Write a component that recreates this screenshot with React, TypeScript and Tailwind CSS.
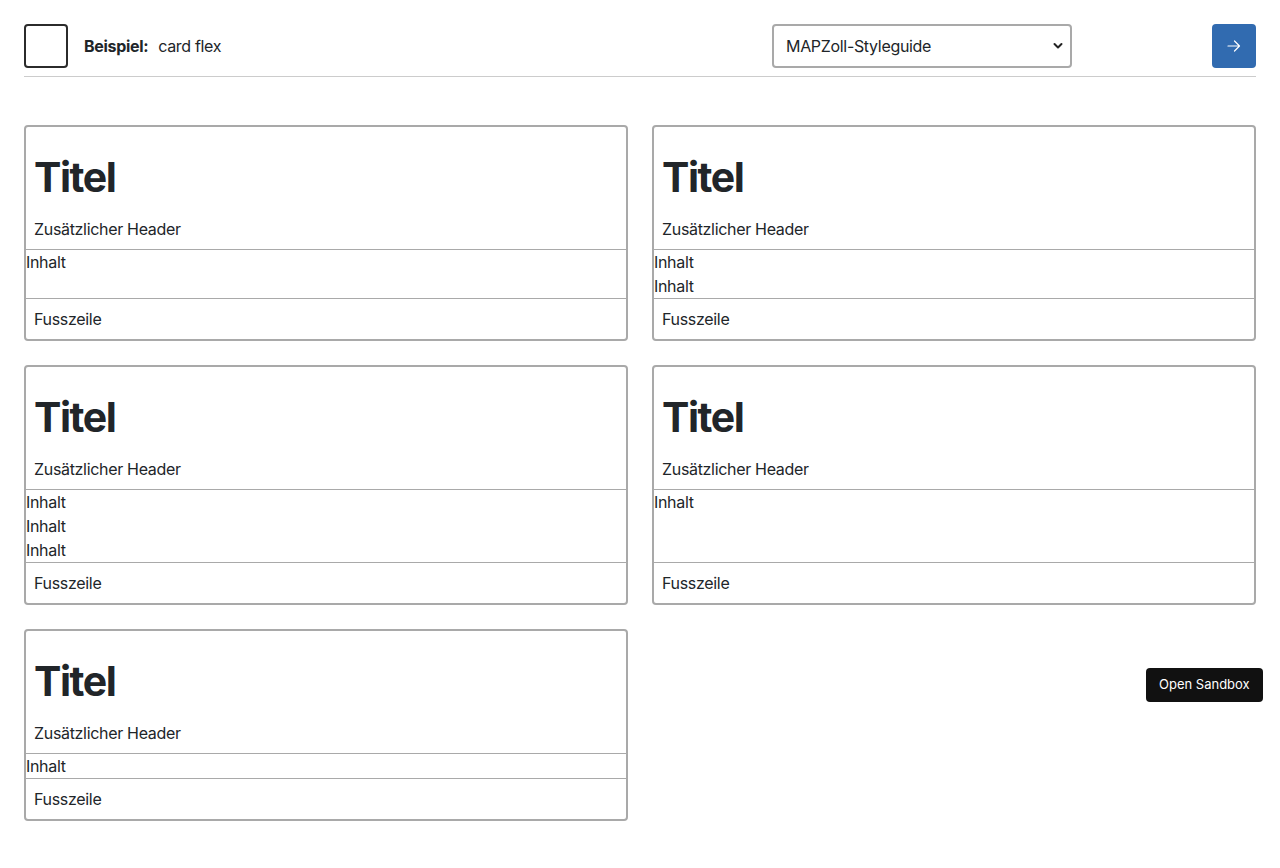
import React from "react";

function Card({ lines }: { lines: number }) {
  return (
    <div className="flex flex-col rounded-[4px] border-2 border-[#a9a9a9] bg-white">
      <div className="px-2 pb-2 pt-[26px]">
        <h1 className="mb-4 text-[41px] font-bold leading-[48px] tracking-[-0.035em] text-[#212529]">Titel</h1>
        <div className="text-base leading-6 tracking-[-0.02em] text-[#212529]">Zusätzlicher Header</div>
      </div>
      <div className="flex-1 border-t border-[#a9a9a9] text-base leading-6 tracking-[-0.02em] text-[#212529]">
        {Array.from({ length: lines }).map((_, i) => (
          <div key={i}>Inhalt</div>
        ))}
      </div>
      <div className="border-t border-[#a9a9a9] px-2 py-2 text-base leading-6 tracking-[-0.02em] text-[#212529]">Fusszeile</div>
    </div>
  );
}

export default function App() {
  return (
    <div className="relative min-h-[868px] bg-white font-['Inter',sans-serif] text-[#212529]">
      <div className="px-6 pt-6">
        <div className="flex items-center pb-2">
          <div className="h-11 w-11 rounded-[4px] border-2 border-[#2b2b2b]" />
          <div className="ml-4 text-base leading-6 tracking-[-0.02em]">
            <span className="font-bold">Beispiel:</span>
            <span className="ml-[10px]">card flex</span>
          </div>
          <div className="relative ml-auto h-11 w-[300px]">
            <select className="h-11 w-full appearance-none rounded-[4px] border-2 border-[#a9a9a9] bg-white pl-3 text-base tracking-[-0.02em] text-[#212529] outline-none">
              <option>MAPZoll-Styleguide</option>
            </select>
            <svg className="pointer-events-none absolute right-[9px] top-[18px]" width="10" height="8" viewBox="0 0 10 8">
              <path d="M1.5 2 L5 5.5 L8.5 2" fill="none" stroke="#222" strokeWidth="2" strokeLinecap="round" strokeLinejoin="round" />
            </svg>
          </div>
          <button className="ml-[140px] flex h-11 w-11 items-center justify-center rounded-[4px] bg-[#316bb0]">
            <svg width="14" height="12" viewBox="0 0 14 12">
              <path d="M1 6 H12.5 M7.5 1 L12.5 6 L7.5 11" fill="none" stroke="white" strokeWidth="1.2" strokeLinecap="round" strokeLinejoin="round" />
            </svg>
          </button>
        </div>
        <div className="h-px bg-[#cccccc]" />
      </div>
      <div className="grid grid-cols-2 gap-6 px-6 pt-12 pb-12">
        <Card lines={1} />
        <Card lines={2} />
        <Card lines={3} />
        <Card lines={1} />
        <Card lines={1} />
      </div>
      <button className="absolute left-[1146px] top-[668px] h-[34px] rounded-[4px] bg-[#111111] px-[13px] text-[13px] text-white">
        Open Sandbox
      </button>
    </div>
  );
}
